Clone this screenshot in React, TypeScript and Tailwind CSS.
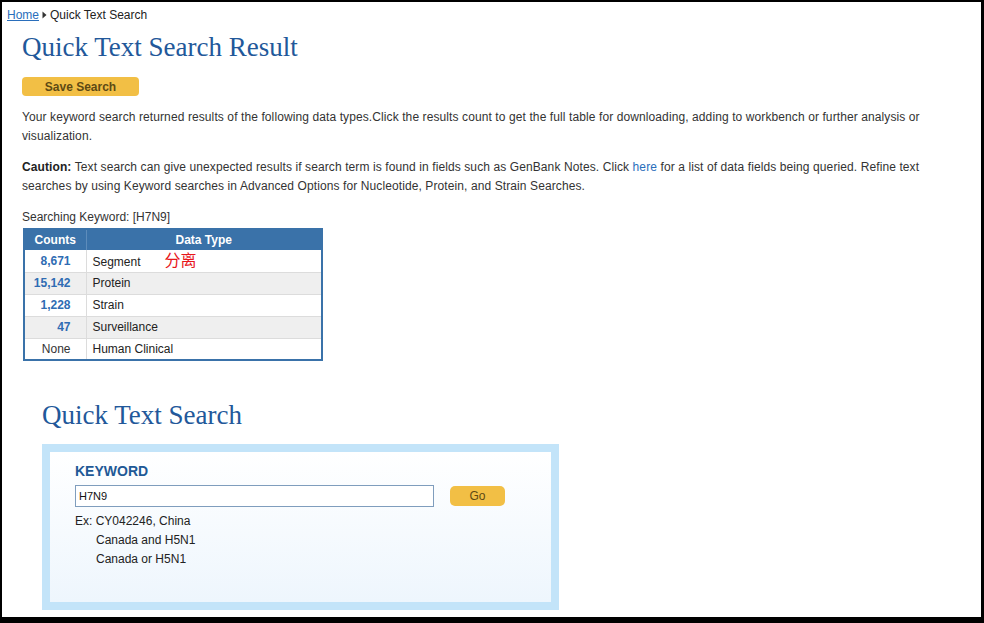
import React from "react";

const rows = [
  { count: "8,671", type: "Segment", note: "分离" },
  { count: "15,142", type: "Protein" },
  { count: "1,228", type: "Strain" },
  { count: "47", type: "Surveillance" },
  { count: "None", type: "Human Clinical", plain: true },
];

export default function App() {
  return (
    <div className="h-[623px] w-[984px] overflow-hidden border-t-2 border-l-2 border-r-[3px] border-b-[6px] border-black bg-white font-['Liberation_Sans',Arial,sans-serif] text-[12px] text-[#333]">
      <div className="flex items-center pl-[5px] pt-[5px] leading-[16px]">
        <a href="#" className="text-[#2a6ebb] underline">
          Home
        </a>
        <svg width="7" height="8" viewBox="0 0 7 8" className="mx-[2px]">
          <path d="M1.5 0.5 L5.5 4 L1.5 7.5 Z" fill="#333" />
        </svg>
        <span className="text-[#222]">Quick Text Search</span>
      </div>

      <div className="pl-[20px] pr-[25px]">
        <h1 className="mt-[8px] font-['Liberation_Serif',Georgia,serif] text-[27px] leading-[32px] text-[#22589a]">
          Quick Text Search Result
        </h1>

        <button className="mt-[14px] flex h-[19px] w-[117px] items-center justify-center rounded-[4px] bg-[#f2bf45] text-[12px] font-bold text-[#5e4a14]">
          Save Search
        </button>

        <p className="mt-[12px] leading-[19px] tracking-[0.1px]">
          Your keyword search returned results of the following data types.Click the results count to get the full table for
          downloading, adding to workbench or further analysis or visualization.
        </p>

        <p className="mt-[12px] leading-[19px] tracking-[0.1px]">
          <b className="text-[#222]">Caution:</b> Text search can give unexpected results if search term is found in fields such
          as GenBank Notes. Click{" "}
          <a href="#" className="text-[#2a6ebb]">
            here
          </a>{" "}
          for a list of data fields being queried. Refine text searches by using Keyword searches in Advanced Options for
          Nucleotide, Protein, and Strain Searches.
        </p>

        <div className="mt-[12px] leading-[19px]">Searching Keyword: [H7N9]</div>

        <table className="ml-[1px] mt-[1px] w-[300px] border-collapse border-2 border-[#3a72a9]">
          <thead>
            <tr className="h-[21px] bg-[#3a72a9] text-white">
              <th className="w-[62px] border-r border-[#5d8cbb] text-center font-bold">Counts</th>
              <th className="text-center font-bold">Data Type</th>
            </tr>
          </thead>
          <tbody>
            {rows.map((r, i) => (
              <tr key={r.type} className={`h-[22px] border-b border-[#dcdcdc] ${i % 2 === 1 ? "bg-[#efefef]" : "bg-white"}`}>
                <td
                  className={`border-r border-[#dcdcdc] pr-[15px] text-right ${
                    r.plain ? "text-[#333]" : "font-bold text-[#2f6cb3]"
                  }`}
                >
                  {r.count}
                </td>
                <td className="pl-[6px] text-[#222]">
                  {r.type}
                  {r.note && (
                    <span className="ml-[24px] font-['Noto_Sans_CJK_SC',sans-serif] text-[16px] leading-[16px] text-[#e8161b]">
                      {r.note}
                    </span>
                  )}
                </td>
              </tr>
            ))}
          </tbody>
        </table>

        <h2 className="ml-[20px] mt-[38px] font-['Liberation_Serif',Georgia,serif] text-[27px] leading-[32px] text-[#22589a]">
          Quick Text Search
        </h2>

        <div className="ml-[20px] mt-[13px] h-[166px] w-[517px] border-8 border-[#c3e4f9] bg-gradient-to-b from-white to-[#eef6fd] pl-[25px] pt-[10px]">
          <div className="text-[14px] font-bold leading-[18px] text-[#1f5996]">KEYWORD</div>
          <div className="mt-[5px] flex items-center">
            <input
              readOnly
              value="H7N9"
              className="h-[22px] w-[359px] border border-[#7f9dbd] bg-white px-[3px] text-[11px] text-[#111] outline-none"
            />
            <button className="ml-[16px] flex h-[20px] w-[55px] items-center justify-center rounded-[5px] bg-[#f2bf45] text-[12px] text-[#5e4a14]">
              Go
            </button>
          </div>
          <div className="mt-[5px] leading-[19px] text-[#222]">
            <div>Ex: CY042246, China</div>
            <div className="pl-[21px]">Canada and H5N1</div>
            <div className="pl-[21px]">Canada or H5N1</div>
          </div>
        </div>
      </div>
    </div>
  );
}
